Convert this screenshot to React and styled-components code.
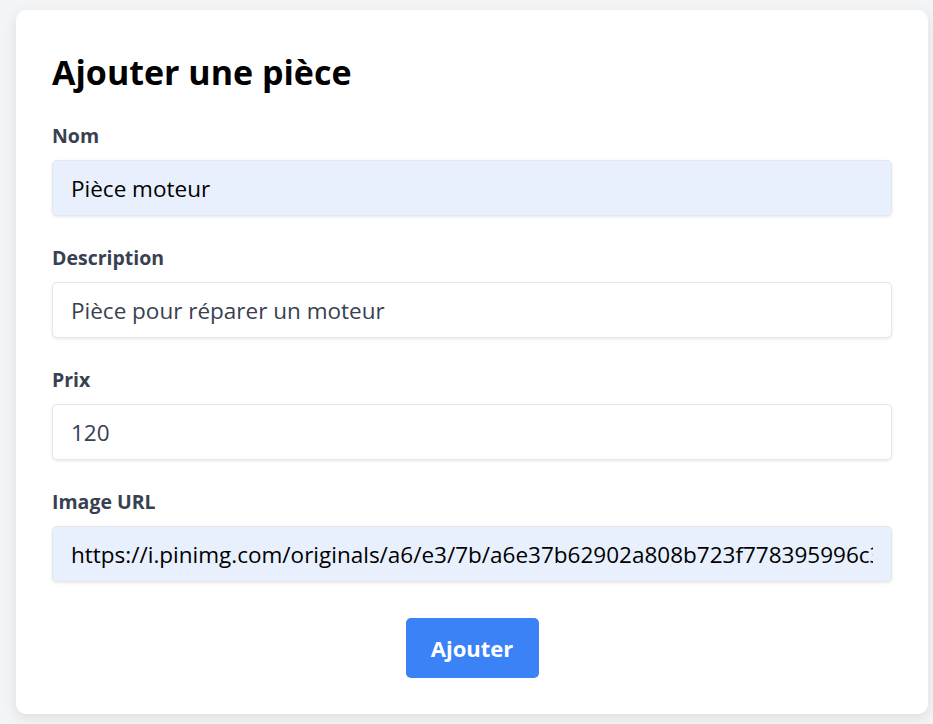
import styled, { createGlobalStyle } from 'styled-components'

const GlobalStyle = createGlobalStyle`
  * { box-sizing: border-box; }
  body {
    margin: 0;
    background-color: #f3f4f6;
    font-family: "Open Sans", "Noto Sans", sans-serif;
  }
`

function App() {
  return (
    <>
      <GlobalStyle />
      <Page>
        <Card>
          <Title>Ajouter une pièce</Title>
          <Field>
            <Label>Nom</Label>
            <Input type="text" defaultValue="Pièce moteur" $autofill />
          </Field>
          <Field>
            <Label>Description</Label>
            <Input type="text" defaultValue="Pièce pour réparer un moteur" />
          </Field>
          <Field>
            <Label>Prix</Label>
            <Input type="text" defaultValue="120" />
          </Field>
          <Field>
            <Label>Image URL</Label>
            <Input
              type="text"
              defaultValue="https://i.pinimg.com/originals/a6/e3/7b/a6e37b62902a808b723f778395996c3f.jpg"
              $autofill
            />
          </Field>
          <Actions>
            <Button>Ajouter</Button>
          </Actions>
        </Card>
      </Page>
    </>
  )
}

export default App

const Page = styled.div`
  padding: 10px 5px 10px 16px;
`

const Card = styled.div`
  width: 912px;
  background-color: #ffffff;
  border-radius: 10px;
  box-shadow: 0 4px 14px rgba(0, 0, 0, 0.09);
  padding: 42px 36px 36px;
`

const Title = styled.h1`
  margin: 0 0 30px;
  font-size: 34px;
  line-height: 40px;
  font-weight: 700;
  color: #000000;
`

const Field = styled.div`
  display: flex;
  flex-direction: column;
  margin-bottom: 28px;
`

const Label = styled.label`
  font-size: 19.5px;
  line-height: 28px;
  font-weight: 700;
  color: #374151;
  margin-bottom: 10px;
`

const Input = styled.input`
  width: 100%;
  height: 56px;
  padding: 0 18px;
  border: 1px solid #e5e7eb;
  border-radius: 5px;
  box-shadow: 0 1px 3px rgba(0, 0, 0, 0.1);
  background-color: ${(p) => (p.$autofill ? '#e8f0fe' : '#ffffff')};
  color: ${(p) => (p.$autofill ? '#000000' : '#374151')};
  font-family: "Open Sans", "Noto Sans", sans-serif;
  font-size: 22.5px;
  outline: none;
`

const Actions = styled.div`
  display: flex;
  justify-content: center;
  padding-top: 8px;
`

const Button = styled.button`
  width: 133px;
  height: 60px;
  border: none;
  border-radius: 5px;
  background-color: #3b82f6;
  color: #ffffff;
  font-family: "Open Sans", "Noto Sans", sans-serif;
  font-size: 22px;
  font-weight: 700;
  cursor: pointer;
`
